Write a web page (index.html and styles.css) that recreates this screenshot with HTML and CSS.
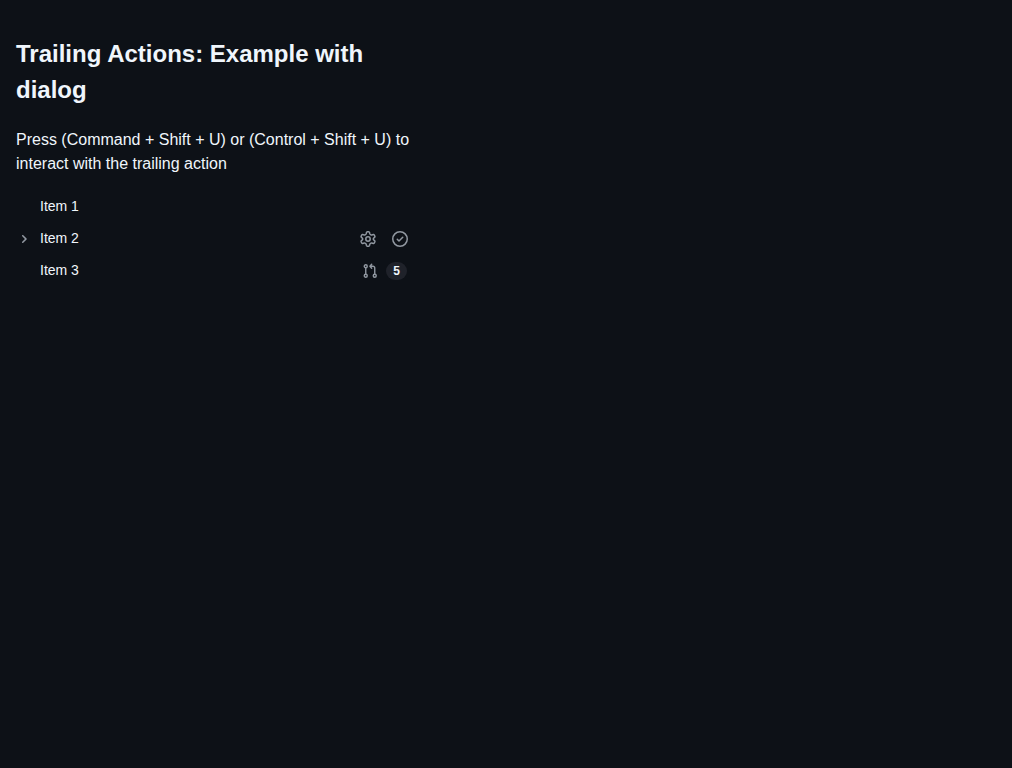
FILE: index.html
```html
<!DOCTYPE html>
<html lang="en">
<head>
<meta charset="utf-8">
<title>Trailing Actions</title>
<link rel="stylesheet" href="styles.css">
</head>
<body>
<main class="story">
  <h1 class="title">Trailing Actions: Example with dialog</h1>
  <p class="hint">Press (Command + Shift + U) or (Control + Shift + U) to interact with the trailing action</p>
  <ul class="tree">
    <li class="item"><span class="toggle"></span><span class="label">Item 1</span></li>
    <li class="item">
      <span class="toggle"><svg width="12" height="12" viewBox="0 0 12 12"><path d="M4.7 10c-.2 0-.4-.1-.5-.2-.3-.3-.3-.8 0-1.1L6.9 6 4.2 3.3c-.3-.3-.3-.8 0-1.1.3-.3.8-.3 1.1 0l3.3 3.2c.3.3.3.8 0 1.1L5.3 9.7c-.2.2-.4.3-.6.3Z"/></svg></span>
      <span class="label">Item 2</span>
      <span class="actions">
        <button class="action" aria-label="Settings"><svg width="16" height="16" viewBox="0 0 16 16"><g class="outline"><path d="M7.3.8h1.4q.6.1.8.7l.4 1.5q.2.4.6.6l.5.3q.4.2.8.1l1.5-.4q.6-.1.9.3l.7 1.3q.2.5-.2.9l-1.1 1.1q-.3.3-.3.8t.3.8l1.1 1.1q.4.4.2.9l-.7 1.3q-.3.4-.9.3l-1.5-.4q-.4-.1-.8.1l-.5.3q-.4.2-.6.6l-.4 1.5q-.2.6-.8.7H7.3q-.6-.1-.8-.7L6.100 13q-.2-.4-.6-.6l-.5-.3q-.4-.2-.8-.1l-1.5.4q-.6.1-.9-.3l-.7-1.300q-.2-.5.2-.9l1.100-1.100q.3-.3.3-.8t-.3-.8L1.300 6.100q-.4-.4-.2-.9l.7-1.300q.3-.4.9-.3l1.500.4q.4.1.8-.1l.5-.3q.4-.2.6-.6l.4-1.500q.2-.6.8-.7Z"/><circle cx="8" cy="8" r="2.200"/></g></svg></button>
        <button class="action" aria-label="Complete"><svg width="16" height="16" viewBox="0 0 16 16"><path d="M0 8a8 8 0 1 1 16 0A8 8 0 0 1 0 8Zm1.5 0a6.5 6.5 0 1 0 13 0 6.5 6.5 0 0 0-13 0Zm9.78-1.22-3.75 3.75a.75.75 0 0 1-1.06 0L4.72 8.78a.75.75 0 0 1 1.06-1.06L7 8.94l3.22-3.22a.75.75 0 0 1 1.06 1.06Z"/></svg></button>
      </span>
    </li>
    <li class="item">
      <span class="toggle"></span><span class="label">Item 3</span>
      <button class="requests" aria-label="Pull requests"><svg width="16" height="16" viewBox="0 0 16 16"><g class="outline branch"><circle cx="3.75" cy="3.25" r="1.5"/><circle cx="3.75" cy="12.75" r="1.5"/><circle cx="12.75" cy="12.75" r="1.5"/><path d="M3.75 4.75v6.5M12.75 11.250V5a1.750 1.750 0 0 0-1.750-1.750H8.500M9.700 1.200 7.900 3.250l1.800 2.050"/></g></svg><span class="counter">5</span></button>
    </li>
  </ul>
</main>
</body>
</html>
```
FILE: styles.css
```css
* { box-sizing: border-box; }
body {
  margin: 0;
  padding: 16px;
  background: #0d1117;
  color: #f0f6fc;
  font-family: "Liberation Sans", Arial, sans-serif;
  font-size: 16px;
  line-height: 24px;
}
.story { width: 400px; padding-top: 20px; }
.title { margin: 0; font-size: 24px; line-height: 36px; font-weight: 700; }
.hint { margin: 20px 0 14px; }
.tree { list-style: none; margin: 0; padding: 0; }
.item { display: flex; align-items: center; height: 32px; font-size: 14px; line-height: 20px; }
.toggle { display: flex; align-items: center; justify-content: center; width: 16px; height: 32px; padding-top: 2px; margin-right: 8px; color: #9198a1; }
.label { flex: 1; }
svg { display: block; fill: currentColor; }
.outline { fill: none; stroke: currentColor; stroke-width: 1.5; }
.branch { stroke-width: 1.4; stroke-linecap: round; stroke-linejoin: round; }
button { border: 0; background: none; padding: 0; margin: 0; font: inherit; color: #9198a1; }
.actions { display: flex; }
.action { display: flex; align-items: center; justify-content: center; width: 32px; height: 32px; padding-top: 2px; }
.requests { display: flex; align-items: center; gap: 8px; height: 32px; padding-top: 2px; margin-right: 9px; }
.counter { min-width: 21px; height: 18px; padding: 0 6px; border-radius: 24px; background: #1f222a; color: #f0f6fc; font-size: 12px; font-weight: 700; line-height: 18px; text-align: center; }
```
